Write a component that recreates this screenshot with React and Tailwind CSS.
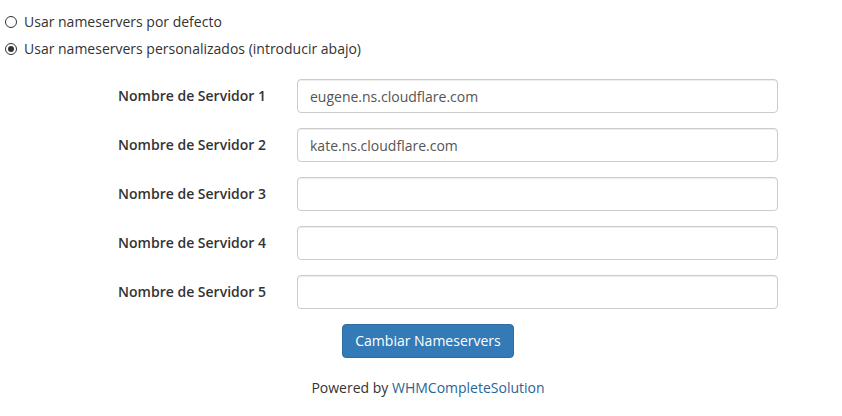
const servers = [
  'eugene.ns.cloudflare.com',
  'kate.ns.cloudflare.com',
  '',
  '',
  '',
];

const Radio = ({ checked, label }) => (
  <label className="flex items-center h-[20px] gap-[7px]">
    <span className="w-[12px] h-[12px] rounded-full border border-[#333] bg-white flex items-center justify-center">
      {checked && <span className="w-[6px] h-[6px] rounded-full bg-[#333]" />}
    </span>
    <span>{label}</span>
  </label>
);

const App = () => {
  return (
    <div className="w-[842px] h-[416px] overflow-hidden bg-white text-[14px] leading-[20px] text-[#333] font-['Open_Sans',sans-serif]">
      <div className="pt-[12px] pl-[5px]">
        {/* Radios */}
        <div className="flex flex-col gap-[7px]">
          <Radio label="Usar nameservers por defecto" />
          <Radio checked label="Usar nameservers personalizados (introducir abajo)" />
        </div>

        {/* Nameserver rows */}
        <div className="mt-[20px] flex flex-col gap-[15px]">
          {servers.map((value, i) => (
            <div key={i} className="flex items-center">
              <span className="w-[261px] text-right font-semibold">Nombre de Servidor {i + 1}</span>
              <input
                type="text"
                defaultValue={value}
                className="ml-[31px] w-[481px] h-[34px] px-[12px] border border-[#ccc] rounded-[4px] text-[14px] text-[#555] outline-none shadow-[inset_0_1px_1px_rgba(0,0,0,0.075)]"
              />
            </div>
          ))}
        </div>
      </div>

      {/* Submit + footer */}
      <div className="ml-[14px] w-[828px] flex flex-col items-center">
        <button className="mt-[15px] h-[34px] px-[12px] bg-[#337ab7] border border-[#2e6da4] rounded-[4px] text-white">
          Cambiar Nameservers
        </button>
        <p className="mt-[20px]">
          Powered by <a className="text-[#2a6496]">WHMCompleteSolution</a>
        </p>
      </div>
    </div>
  );
};

export default App;
